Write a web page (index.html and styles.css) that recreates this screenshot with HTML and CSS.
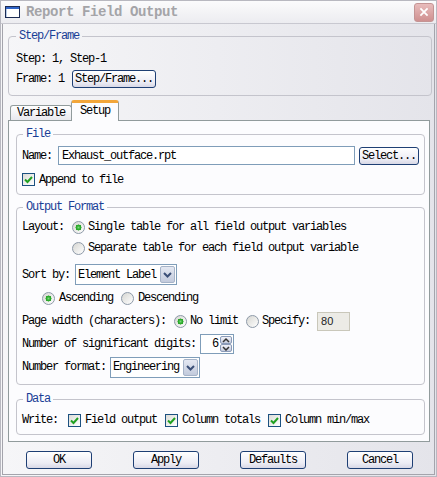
FILE: index.html
```html
<!DOCTYPE html>
<html lang="en">
<head>
    <meta charset="UTF-8">
    <title>Report Field Output</title>
    <link rel="stylesheet" href="styles.css">
</head>
<body>
<div class="window">
    <div class="titlebar">
        <svg class="app-icon" width="15" height="12" viewBox="0 0 15 12">
            <rect x="0.5" y="0.5" width="14" height="11" fill="#fff" stroke="#1c2c54"/>
            <rect x="1" y="1" width="13" height="2" fill="#2f64c8"/>
            <rect x="1" y="3" width="1" height="8" fill="#b8cce8"/>
        </svg>
        <span class="title">Report Field Output</span>
        <span class="close-btn">
            <svg width="20" height="19" viewBox="0 0 20 19">
                <path d="M6 5 L14 13 M14 5 L6 13" stroke="#fff" stroke-width="2" fill="none"/>
            </svg>
        </span>
    </div>

    <div class="content">
        <fieldset class="group step-frame">
            <legend>Step/Frame</legend>
            <div class="group-body">
                <div class="row">Step: 1, Step-1</div>
                <div class="row">Frame: 1 <button type="button" class="btn btn-frame">Step/Frame...</button></div>
            </div>
        </fieldset>

        <div class="tabs">
            <div class="tab">Variable</div>
            <div class="tab active">Setup</div>
        </div>

        <div class="tab-panel">
            <fieldset class="group">
                <legend>File</legend>
                <div class="group-body file-body">
                    <div class="row name-row">
                        <span>Name:</span>
                        <input type="text" class="text-input" value="Exhaust_outface.rpt">
                        <button type="button" class="btn btn-select">Select...</button>
                    </div>
                    <label class="check-row"><span class="check on"><svg width="11" height="11" viewBox="0 0 11 11"><path d="M2 5.5 L4.5 8 L9 3" stroke="#21a121" stroke-width="2" fill="none"/></svg></span>Append to file</label>
                </div>
            </fieldset>

            <fieldset class="group output-group">
                <legend>Output Format</legend>
                <div class="group-body format-body">
                    <div class="row layout-row">
                        <span class="layout-label">Layout:</span>
                        <div class="options">
                            <label class="radio-item"><span class="radio on"></span>Single table for all field output variables</label>
                            <label class="radio-item"><span class="radio"></span>Separate table for each field output variable</label>
                        </div>
                    </div>
                    <div class="row sort-row">
                        <span>Sort by:</span>
                        <div class="combo combo-sort">
                            <span class="combo-text">Element Label</span>
                            <span class="combo-arrow"><svg width="15" height="17" viewBox="0 0 15 17"><path d="M4 7 L7.5 10.5 L11 7" stroke="#3b4f77" stroke-width="2" fill="none"/></svg></span>
                        </div>
                    </div>
                    <div class="row order-row">
                        <label class="radio-item"><span class="radio on"></span>Ascending</label>
                        <label class="radio-item"><span class="radio"></span>Descending</label>
                    </div>
                    <div class="row">
                        <span>Page width (characters):</span>
                        <label class="radio-item page-first"><span class="radio on"></span>No limit</label>
                        <label class="radio-item"><span class="radio"></span>Specify:</label>
                        <input type="text" class="width-input" value="80" disabled>
                    </div>
                    <div class="row">
                        <span>Number of significant digits:</span>
                        <div class="spin">
                            <span class="spin-value">6</span>
                            <span class="spin-buttons">
                                <span class="spin-btn"><svg width="10" height="7" viewBox="0 0 10 7"><path d="M2 5 L5 2 L8 5" stroke="#333" stroke-width="1.5" fill="none"/></svg></span>
                                <span class="spin-btn"><svg width="10" height="7" viewBox="0 0 10 7"><path d="M2 2 L5 5 L8 2" stroke="#333" stroke-width="1.5" fill="none"/></svg></span>
                            </span>
                        </div>
                    </div>
                    <div class="row">
                        <span>Number format:</span>
                        <div class="combo combo-format">
                            <span class="combo-text">Engineering</span>
                            <span class="combo-arrow"><svg width="15" height="17" viewBox="0 0 15 17"><path d="M4 7 L7.5 10.5 L11 7" stroke="#3b4f77" stroke-width="2" fill="none"/></svg></span>
                        </div>
                    </div>
                </div>
            </fieldset>

            <fieldset class="group data-group">
                <legend>Data</legend>
                <div class="group-body data-body">
                    <div class="row write-row">
                        <span class="write-label">Write:</span>
                        <label class="check-row"><span class="check on"><svg width="11" height="11" viewBox="0 0 11 11"><path d="M2 5.5 L4.5 8 L9 3" stroke="#21a121" stroke-width="2" fill="none"/></svg></span>Field output</label>
                        <label class="check-row"><span class="check on"><svg width="11" height="11" viewBox="0 0 11 11"><path d="M2 5.5 L4.5 8 L9 3" stroke="#21a121" stroke-width="2" fill="none"/></svg></span>Column totals</label>
                        <label class="check-row"><span class="check on"><svg width="11" height="11" viewBox="0 0 11 11"><path d="M2 5.5 L4.5 8 L9 3" stroke="#21a121" stroke-width="2" fill="none"/></svg></span>Column min/max</label>
                    </div>
                </div>
            </fieldset>
        </div>

        <div class="actions">
            <button type="button" class="btn btn-action">OK</button>
            <button type="button" class="btn btn-action">Apply</button>
            <button type="button" class="btn btn-action">Defaults</button>
            <button type="button" class="btn btn-action">Cancel</button>
        </div>
    </div>
</div>
</body>
</html>
```

FILE: styles.css
```css
body {
    margin: 0;
    font-family: "Liberation Mono", monospace;
    font-size: 12px;
    letter-spacing: -1.2px;
    color: #000;
}

.window {
    width: 437px;
    height: 477px;
    box-sizing: border-box;
    border: 1px solid #b8b8c0;
    background: linear-gradient(to right, #f6f6f8, #e4e4ea);
    display: flex;
    flex-direction: column;
}

.titlebar {
    height: 22px;
    border-bottom: 1px solid #c8c8d0;
    background: linear-gradient(to bottom, #fbfbfc, #ececf0);
    display: flex;
    align-items: center;
    padding-left: 4px;
}

.app-icon {
    display: block;
}

.title {
    margin-left: 6px;
    font-size: 14px;
    font-weight: bold;
    letter-spacing: -0.4px;
    color: #a4a4a8;
}

.close-btn {
    margin-left: auto;
    margin-right: 2px;
    width: 20px;
    height: 19px;
    box-sizing: border-box;
    border: 1px solid #c49494;
    border-radius: 3px;
    background: linear-gradient(to bottom, #e8bcbc, #cf9090);
    display: flex;
    align-items: center;
    justify-content: center;
}

.close-btn svg {
    display: block;
}

.content {
    flex: 1;
    margin: 0 1px 1px 1px;
    border: 1px solid #a4a4ac;
    border-top: none;
}

/* group boxes */
.group {
    margin: 0;
    padding: 0;
    min-width: 0;
    border: 1px solid #c4c4cc;
    border-radius: 4px;
}

.group legend {
    margin-left: 6px;
    padding: 0 3px;
    line-height: 12px;
    color: #1a3e96;
}

.group-body {
    padding: 6px 5px 7px 5px;
}

.row {
    display: flex;
    align-items: center;
    height: 20px;
    white-space: pre;
}

.step-frame {
    margin: 6px 2px 0 5px;
}

.step-frame legend {
    margin-left: 7px;
}

.step-frame .group-body {
    padding: 7px 7px 6px 7px;
}

/* buttons */
.btn {
    font-family: "Liberation Mono", monospace;
    font-size: 12px;
    letter-spacing: -1.2px;
    color: #000;
    height: 18px;
    padding: 0;
    box-sizing: border-box;
    border: 1px solid #1e3f74;
    border-radius: 3px;
    background: linear-gradient(to bottom, #ffffff, #ececf4 70%, #d8d8e6);
}

.btn-frame {
    width: 84px;
    margin-left: 2px;
}

.btn-select {
    width: 60px;
    margin-left: 4px;
}

.btn-action {
    width: 66px;
}

/* tabs */
.tabs {
    margin: 4px 4px 0 5px;
    padding-left: 2px;
    height: 20px;
    display: flex;
    align-items: flex-end;
}

.tab {
    width: 62px;
    height: 15px;
    box-sizing: border-box;
    border: 1px solid #919b9c;
    border-bottom: none;
    border-radius: 3px 3px 0 0;
    background: linear-gradient(to bottom, #ffffff, #e8e8ee);
    text-align: center;
    line-height: 14px;
}

.tab.active {
    position: relative;
    width: 48px;
    height: 21px;
    margin-bottom: -1px;
    margin-left: -1px;
    border-top: 3px solid #f2a63a;
    background: #fcfcfe;
    line-height: 16px;
}

.tab-panel {
    margin: 0 4px 0 5px;
    border: 1px solid #919b9c;
    background: #fcfcfe;
    padding: 7px 4px 6px 7px;
}

/* file group */
.name-row {
    height: 19px;
}

.text-input {
    flex: 1;
    min-width: 0;
    height: 19px;
    box-sizing: border-box;
    margin-left: 6px;
    padding: 0 3px;
    border: 1px solid #7f9db9;
    font-family: "Liberation Mono", monospace;
    font-size: 12px;
    letter-spacing: -1.2px;
    color: #000;
}

.check-row {
    display: flex;
    align-items: center;
    height: 15px;
    white-space: pre;
}

.file-body .check-row {
    margin-top: 7px;
}

.check {
    width: 13px;
    height: 13px;
    box-sizing: border-box;
    border: 1px solid #1c5180;
    background: linear-gradient(135deg, #dcdcd7, #ffffff);
    margin-right: 4px;
    display: flex;
    align-items: center;
    justify-content: center;
}

.check svg {
    display: block;
}

/* output format group */
.output-group {
    margin-top: 6px;
}

.format-body {
    padding-top: 4px;
    padding-bottom: 7px;
    display: flex;
    flex-direction: column;
    gap: 3px;
}

.layout-row {
    height: auto;
    align-items: flex-start;
}

.layout-label {
    width: 50px;
    line-height: 20px;
}

.options {
    display: flex;
    flex-direction: column;
    gap: 1px;
}

.options .radio-item {
    height: 20px;
}

.radio-item {
    display: flex;
    align-items: center;
    white-space: pre;
    margin-right: 8px;
}

.radio {
    width: 13px;
    height: 13px;
    box-sizing: border-box;
    border: 1px solid #8d99a8;
    border-radius: 50%;
    background: linear-gradient(135deg, #d6d6d2, #ffffff);
    margin-right: 3px;
}

.radio.on {
    background: radial-gradient(circle, #7cd67c 0, #2fae2f 1.8px, #21a121 2.8px, transparent 3.2px),
        linear-gradient(135deg, #d6d6d2, #ffffff);
}

.sort-row {
    height: 21px;
    margin-top: 3px;
}

.combo {
    height: 21px;
    box-sizing: border-box;
    margin-left: 5px;
    border: 1px solid #7f9db9;
    background: #fff;
    display: flex;
    align-items: center;
    padding: 0 1px 0 2px;
}

.combo-sort {
    width: 102px;
}

.combo-format {
    width: 90px;
    margin-left: 4px;
}

.combo-text {
    flex: 1;
}

.combo-arrow {
    width: 15px;
    height: 17px;
    box-sizing: border-box;
    border: 1px solid #a6b3c8;
    border-radius: 2px;
    background: linear-gradient(to bottom, #e4e8f2, #c2cadc);
}

.combo-arrow svg {
    display: block;
    margin: -1px;
}

.order-row {
    padding-left: 20px;
}

.order-row .radio {
    margin-right: 4px;
}

.page-first {
    margin-left: 8px;
}

.width-input {
    width: 33px;
    height: 19px;
    box-sizing: border-box;
    margin-left: -1px;
    padding: 0 3px;
    border: 1px solid #c9c7ba;
    background: #ecebe6;
    font-family: "Liberation Sans", sans-serif;
    font-size: 11px;
    color: #222;
}

.spin {
    width: 34px;
    height: 20px;
    box-sizing: border-box;
    margin-left: 4px;
    border: 1px solid #7f9db9;
    background: #fff;
    display: flex;
    align-items: center;
    justify-content: flex-end;
    padding-right: 1px;
}

.spin-value {
    margin-right: 2px;
}

.spin-buttons {
    display: flex;
    flex-direction: column;
}

.spin-btn {
    width: 12px;
    height: 8px;
    box-sizing: border-box;
    border: 1px solid #8a9ab8;
    border-radius: 2px;
    background: linear-gradient(to bottom, #f2f2f8, #c4cadc);
    display: flex;
    align-items: center;
    justify-content: center;
    overflow: hidden;
}

.spin-btn svg {
    display: block;
}

/* data group */
.data-group {
    margin-top: 8px;
}

.data-body {
    padding-top: 5px;
    padding-bottom: 4px;
}

.write-label {
    width: 46px;
}

.write-row .check-row {
    margin-right: 8px;
}

/* bottom buttons */
.actions {
    margin-top: 9px;
    padding-left: 23px;
    display: flex;
    gap: 41px;
}
```
